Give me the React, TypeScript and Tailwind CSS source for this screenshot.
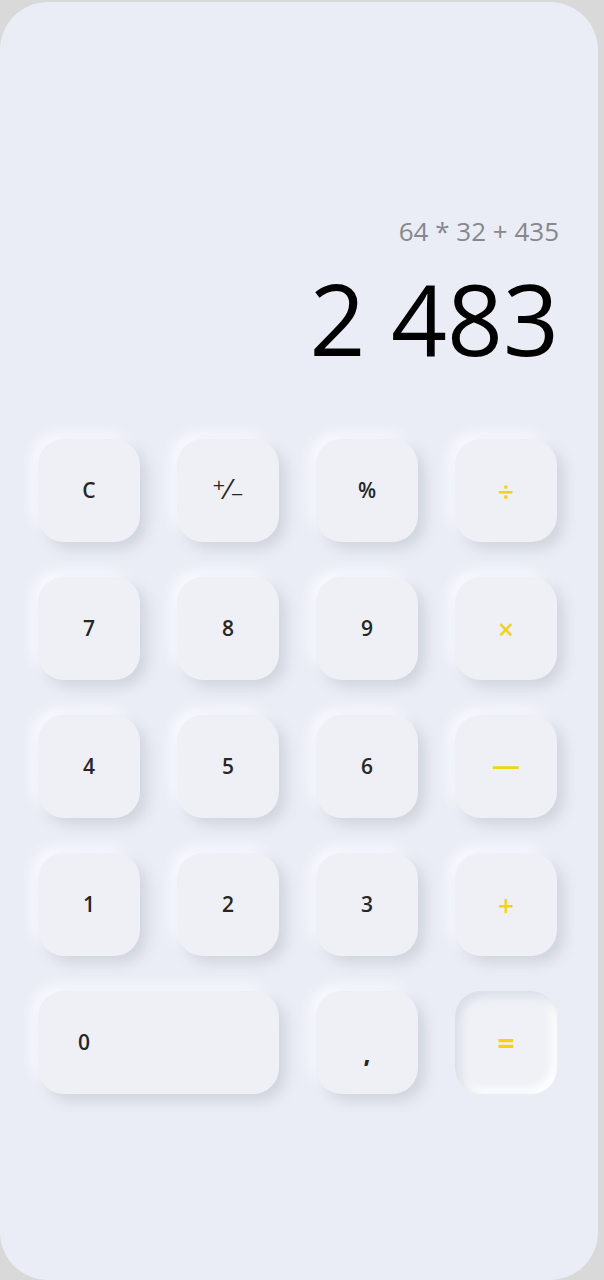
import React from "react";

type Key = {
  label: string;
  kind?: "num" | "op" | "eq";
  wide?: boolean;
};

const keys: Key[] = [
  { label: "C" },
  { label: "⁺⁄₋" },
  { label: "%" },
  { label: "÷", kind: "op" },
  { label: "7" },
  { label: "8" },
  { label: "9" },
  { label: "×", kind: "op" },
  { label: "4" },
  { label: "5" },
  { label: "6" },
  { label: "—", kind: "op" },
  { label: "1" },
  { label: "2" },
  { label: "3" },
  { label: "+", kind: "op" },
  { label: "0", wide: true },
  { label: "," },
  { label: "=", kind: "eq" },
];

const CalcKey: React.FunctionComponent<{ k: Key }> = ({ k }) => {
  const base = "h-[103px] rounded-[26px] flex items-center select-none";
  if (k.kind === "eq") {
    return (
      <div
        className={`${base} justify-center bg-[#eff1f6] text-[#f2d416] text-[30px] font-bold shadow-[inset_5px_5px_10px_#d9dde6,inset_-5px_-5px_10px_#ffffff]`}
      >
        {k.label}
      </div>
    );
  }
  let label: React.ReactNode = k.label;
  if (k.label === ",") label = <span className="mt-[26px] font-extrabold">,</span>;
  if (k.label === "—") label = <span className="-mt-[6px]">{k.label}</span>;
  if (k.label === "⁺⁄₋")
    label = (
      <span className="text-[26px] font-normal" style={{ fontFamily: '"DejaVu Sans", sans-serif' }}>
        {k.label}
      </span>
    );
  return (
    <div
      className={`${base} ${k.wide ? "col-span-2 justify-start pl-[40px]" : "justify-center"} bg-[#eef0f6] shadow-[7px_7px_14px_#d0d4dd,-6px_-6px_12px_#f9faff] ${
        k.kind === "op" ? "text-[#f2d416] text-[28px] font-semibold" : "text-[#262626] text-[21px] font-semibold"
      }`}
    >
      {label}
    </div>
  );
};

export default function App() {
  return (
    <div
      className="w-[604px] h-[1280px] bg-[#d9d9d9] pt-[2px] pr-[6px]"
      style={{ fontFamily: '"Open Sans", "Liberation Sans", sans-serif' }}
    >
      <div className="w-[598px] h-[1278px] rounded-[48px] bg-[#eaedf5] flex flex-col">
        <div className="pt-[212px] pr-[39px] flex flex-col items-end">
          <div className="text-[26px] leading-[34px] text-[#86888d]">64 * 32 + 435</div>
          <div className="mt-[20px] text-[98px] leading-[100px] text-black">2 483</div>
        </div>
        <div className="mt-[71px] pl-[38px] grid grid-cols-[repeat(4,102px)] gap-x-[37px] gap-y-[35px]">
          {keys.map((k, i) => (
            <CalcKey key={i} k={k} />
          ))}
        </div>
      </div>
    </div>
  );
}
